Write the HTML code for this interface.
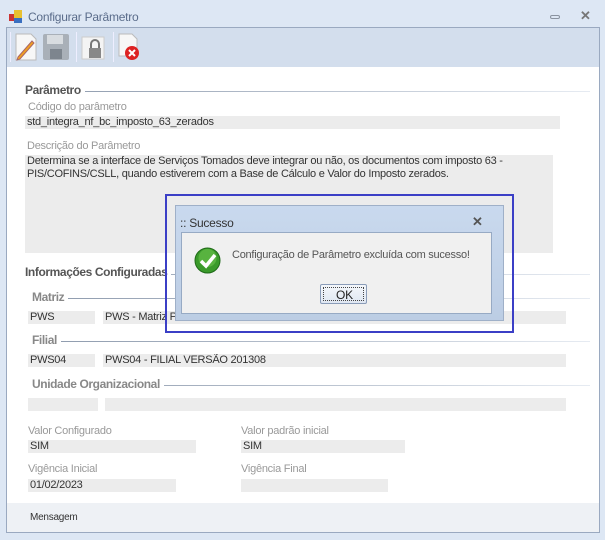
<!DOCTYPE html>
<html><head><meta charset="utf-8"><style>
*{margin:0;padding:0;box-sizing:border-box}
body{width:605px;height:540px;background:#dde7f4;font-family:"Liberation Sans",sans-serif;font-size:11px;letter-spacing:-0.25px;color:#333;position:relative;overflow:hidden}
.a{position:absolute;white-space:nowrap}
.f{position:absolute;background:#ececec;height:13px;line-height:13px;padding-left:2px;color:#333;white-space:nowrap;overflow:hidden}
.lbl{position:absolute;color:#999;white-space:nowrap}
.h{position:absolute;font-weight:bold;color:#555;font-size:12px;letter-spacing:-0.4px;background:#fff;padding-right:4px;white-space:nowrap;z-index:1}
.ln{position:absolute;height:1px;background:linear-gradient(90deg,#8b98ab,#e6ebf2)}
</style></head><body>
<div class="a" style="left:9px;top:10px;width:13px;height:13px">
<div style="position:absolute;left:0;top:4px;width:6px;height:7px;background:#c33"></div>
<div style="position:absolute;left:5px;top:0;width:8px;height:8px;background:#e8c030"></div>
<div style="position:absolute;left:5px;top:8px;width:8px;height:5px;background:#3a6fc0"></div></div>
<div class="a" style="left:28px;top:10px;font-size:12px;color:#5a6c8a">Configurar Parâmetro</div>
<div class="a" style="left:550px;top:15px;width:10px;height:4px;border:1px solid #8a93a0;border-radius:2px"></div>
<div class="a" style="left:580px;top:8px;font-size:13px;color:#777;font-weight:bold">✕</div>
<div class="a" style="left:6px;top:27px;width:594px;height:506px;border:1px solid #9aa9c0;background:#fff"></div>
<div class="a" style="left:7px;top:28px;width:592px;height:39px;background:#d3deed"></div>
<div class="a" style="left:10px;top:32px;width:1px;height:30px;background:#eef"></div>
<svg class="a" style="left:13px;top:32px" width="26" height="30"><path d="M3 2h15l5 5v21H3z" fill="#f7f7f7" stroke="#bbb"/><path d="M5 25l14-16 2 2-14 16-3 1z" fill="#f0a020" stroke="#a66"/></svg>
<svg class="a" style="left:42px;top:33px" width="28" height="28"><rect x="1" y="1" width="26" height="26" rx="2" fill="#a9b0b8"/><rect x="5" y="2" width="16" height="9" fill="#d8dce0"/><rect x="8" y="16" width="12" height="10" fill="#7d858e"/></svg>
<div class="a" style="left:76px;top:32px;width:1px;height:30px;background:#eef"></div>
<svg class="a" style="left:80px;top:33px" width="28" height="28"><rect x="2" y="4" width="22" height="22" fill="#f4f4f4" stroke="#ccc"/><path d="M11 15v-4a4 4 0 0 1 8 0v4" fill="none" stroke="#777" stroke-width="2"/><rect x="9" y="15" width="12" height="10" fill="#888"/></svg>
<div class="a" style="left:113px;top:32px;width:1px;height:30px;background:#eef"></div>
<svg class="a" style="left:117px;top:32px" width="26" height="30"><path d="M2 2h13l5 5v17H2z" fill="#f7f7f7" stroke="#bbb"/><circle cx="15" cy="21" r="7" fill="#d22"/><path d="M12 18l6 6M18 18l-6 6" stroke="#fff" stroke-width="2"/></svg>

<div class="ln" style="left:25px;top:91px;width:565px"></div><div class="h" style="left:25px;top:83px">Parâmetro</div>
<div class="lbl" style="left:28px;top:101px">Código do parâmetro</div>
<div class="f" style="left:25px;top:116px;width:535px">std_integra_nf_bc_imposto_63_zerados</div>
<div class="lbl" style="left:27px;top:140px">Descrição do Parâmetro</div>
<div class="f" style="left:25px;top:155px;width:528px;height:98px;line-height:13px;white-space:normal">Determina se a interface de Serviços Tomados deve integrar ou não, os documentos com imposto 63 -<br>PIS/COFINS/CSLL, quando estiverem com a Base de Cálculo e Valor do Imposto zerados.</div>
<div class="ln" style="left:25px;top:274px;width:565px"></div><div class="h" style="left:25px;top:265px">Informações Configuradas</div>
<div class="ln" style="left:32px;top:298px;width:558px"></div><div class="h" style="left:32px;top:290px;color:#888">Matriz</div>
<div class="f" style="left:28px;top:311px;width:67px">PWS</div>
<div class="f" style="left:103px;top:311px;width:463px">PWS - Matriz PWS - Nome Fantasia Matriz PWS</div>
<div class="ln" style="left:32px;top:341px;width:558px"></div><div class="h" style="left:32px;top:333px;color:#888">Filial</div>
<div class="f" style="left:28px;top:354px;width:67px">PWS04</div>
<div class="f" style="left:103px;top:354px;width:463px">PWS04 - FILIAL VERSÃO 201308</div>
<div class="ln" style="left:32px;top:385px;width:558px"></div><div class="h" style="left:32px;top:377px;color:#888">Unidade Organizacional</div>
<div class="f" style="left:28px;top:398px;width:70px"></div>
<div class="f" style="left:105px;top:398px;width:461px"></div>
<div class="lbl" style="left:28px;top:425px">Valor Configurado</div>
<div class="f" style="left:28px;top:440px;width:168px">SIM</div>
<div class="lbl" style="left:241px;top:425px">Valor padrão inicial</div>
<div class="f" style="left:241px;top:440px;width:164px">SIM</div>
<div class="lbl" style="left:28px;top:463px">Vigência Inicial</div>
<div class="f" style="left:28px;top:479px;width:148px">01/02/2023</div>
<div class="lbl" style="left:241px;top:463px">Vigência Final</div>
<div class="f" style="left:241px;top:479px;width:147px"></div>
<div class="a" style="left:7px;top:503px;width:592px;height:29px;background:#eef1f5"></div>
<div class="a" style="left:30px;top:512px;font-size:10px;color:#333">Mensagem</div>

<div class="a" style="left:165px;top:194px;width:349px;height:139px;border:2px solid #3b3fc6;z-index:2"></div>
<div class="a" style="left:175px;top:205px;width:329px;height:116px;background:linear-gradient(#c9d9ee,#bccde4);border:1px solid #9fb0c8;z-index:2"></div>
<div class="a" style="left:180px;top:216px;font-size:12px;color:#333;z-index:3">:: Sucesso</div>
<div class="a" style="left:472px;top:214px;font-size:13px;color:#555;font-weight:bold;z-index:3">✕</div>
<div class="a" style="left:181px;top:232px;width:311px;height:82px;background:#f0f0f0;border:1px solid #97aac4;z-index:3"></div>
<svg class="a" style="left:194px;top:247px;z-index:4" width="27" height="27"><circle cx="13.5" cy="13.5" r="12.5" fill="#3a9a2a" stroke="#1f6a18"/><circle cx="13.5" cy="11" r="9" fill="#6cc44e" opacity=".6"/><path d="M7 14l5 5 9-11" fill="none" stroke="#fff" stroke-width="3.5"/></svg>
<div class="a" style="left:232px;top:249px;font-size:11px;color:#555;z-index:4">Configuração de Parâmetro excluída com sucesso!</div>
<div class="a" style="left:320px;top:284px;width:47px;height:20px;border:1px solid #8a9cb8;background:linear-gradient(#f4f7fb,#dfe7f2);border-radius:2px;z-index:4"></div>
<div class="a" style="left:323px;top:287px;width:41px;height:14px;border:1px dotted #444;z-index:5"></div>
<div class="a" style="left:336px;top:288px;font-size:12px;color:#222;z-index:5">OK</div>
</body></html>
